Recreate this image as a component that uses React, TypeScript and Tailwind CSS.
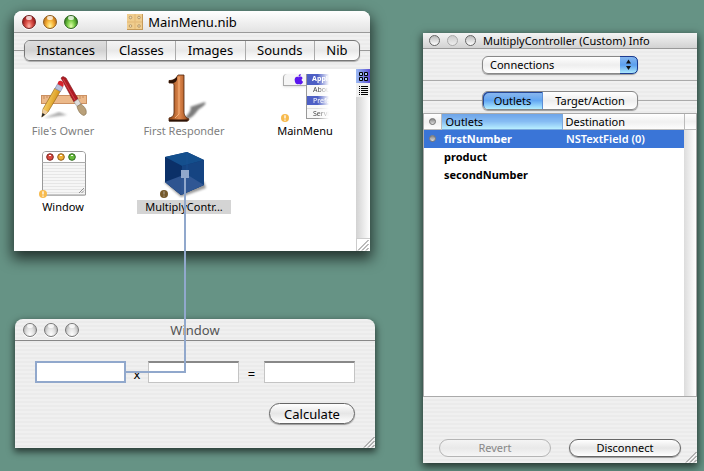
import type { ReactNode } from "react";

const stripes =
  "bg-[repeating-linear-gradient(180deg,#f0f0f0_0px,#f0f0f0_2px,#ebebeb_2px,#ebebeb_4px)]";

const lightColors = {
  red: "border-[#6e2222] bg-[radial-gradient(ellipse_at_50%_85%,#ffb9ad_0%,#e05a50_35%,#a51f1f_75%)]",
  yellow: "border-[#8a5a1c] bg-[radial-gradient(ellipse_at_50%_85%,#fff6a0_0%,#f9b83c_40%,#c4741a_80%)]",
  green: "border-[#2f6420] bg-[radial-gradient(ellipse_at_50%_85%,#e4ffae_0%,#7fd04a_40%,#35801f_80%)]",
  gray: "border-[#777] bg-[radial-gradient(ellipse_at_50%_90%,#ffffff_0%,#e2e2e2_45%,#adadad_90%)]",
};

function TrafficLight({ color, label }: { color: keyof typeof lightColors; label: string }) {
  return (
    <button
      aria-label={label}
      className={`relative block size-[14px] rounded-full border shadow-[0_1px_0_#fff] ${lightColors[color]}`}
    >
      <span className="absolute top-0 left-[3px] h-1 w-1.5 rounded-full bg-white/75" />
    </button>
  );
}

function Grip({ className = "" }: { className?: string }) {
  return (
    <svg viewBox="0 0 12 12" className={`size-3 ${className}`} aria-hidden="true">
      <path d="M1 11.5 11.5 1M5 11.5 11.5 5M9 11.5 11.5 9" stroke="#777" fill="none" />
      <path d="M2 12 12 2M6 12 12 6" stroke="#fff" strokeWidth=".6" fill="none" />
    </svg>
  );
}

/* Icons of the nib's instances */

function OwnerIcon() {
  return (
    <svg viewBox="0 0 48 48" className="size-12">
      <defs>
        <linearGradient id="pencil" x1="0" y1="0" x2="1" y2=".5">
          <stop offset="0.2" stopColor="#ffe27a" />
          <stop offset="0.8" stopColor="#d9971d" />
        </linearGradient>
        <filter id="soft">
          <feGaussianBlur stdDeviation="1" />
        </filter>
      </defs>
      <path d="M5 44 28 41 20 38Z" fill="#777" opacity=".6" filter="url(#soft)" />
      <rect x="2.5" y="21.5" width="45" height="8" fill="#ecb98a" stroke="#cb9062" />
      <path d="M5 22v3M8 22v2M11 22v3M14 22v2M32 22v2M35 22v3M38 22v2M41 22v3M44 22v2" stroke="#b97a48" strokeWidth=".7" />
      <path d="m22 4 2-1.500 3 1.500 12 21-4 3Z" fill="#b01c24" stroke="#7a1016" strokeWidth=".6" />
      <path d="m24 5 12 21" stroke="#e0565a" strokeWidth=".7" />
      <path d="m35 28 4-3 3 5-4 2.500Z" fill="#ddd" stroke="#888" strokeWidth=".5" />
      <path d="m38 32.500 4-2.500c4 3 6 6 5 10l-2 1.500c-4-1-6-5-7-9Z" fill="#b9a07a" stroke="#806947" strokeWidth=".6" />
      <path d="M16 14 21.500 17 9 38 3 43 4 35Z" fill="url(#pencil)" stroke="#9a6a1c" strokeWidth=".7" />
      <path d="m4 35 5 3-6 5Z" fill="#edcda0" />
      <path d="m3.500 39 2.500 1.500-3.500 3Z" fill="#222" />
      <path d="m18.500 10 5.500 3-2.500 4.500-5.500-3Z" fill="#b9c0da" stroke="#7480a5" strokeWidth=".6" />
      <path d="M18.500 10c.5-3 2-4 4-3s3 3 1.500 6Z" fill="#d9232d" />
    </svg>
  );
}

function ResponderIcon() {
  return (
    <svg viewBox="0 0 48 48" className="size-12">
      <defs>
        <linearGradient id="copper" x1="0" y1="0" x2="1" y2="0">
          <stop offset="0.1" stopColor="#9a4c1a" />
          <stop offset="0.5" stopColor="#e08a50" />
          <stop offset="0.8" stopColor="#b4602a" />
          <stop offset="1" stopColor="#4c210b" />
        </linearGradient>
        <filter id="blur">
          <feGaussianBlur stdDeviation="1.300" />
        </filter>
      </defs>
      <path d="M25 44C30 38 32 34 30 33l15-5c2 3-4 5-7 8-3 4-5 7-10 9Z" fill="#444" opacity=".7" filter="url(#blur)" />
      <path
        d="M9 6.500c5 0 7-2 9-5.500h6v36c0 4 1 6 5 8l-1 2H9v-3c4-1 5-3 5-6V11c0-2-2-2-5-2Z"
        fill="url(#copper)"
        stroke="#4b230c"
        strokeWidth=".8"
      />
      <path d="M9 6.500c4 0 7-2 8-4v3c-1 3-3 4-8 3.500ZM9 45.500h19l-1 2H9Z" fill="#2d1306" />
      <path d="M19 3v37l-4 4" stroke="#f3b07a" fill="none" strokeWidth="1" />
    </svg>
  );
}

function MenuIcon() {
  return (
    <div className="flex size-12 text-[7px] leading-[9px]">
      <div className="ml-0.5 flex h-3 w-[23px] justify-center rounded-tl border-b border-l border-[#aaa] bg-[#f5f5f5] shadow-sm">
        <svg viewBox="0 0 12 12" className="ml-1.5 size-[11px]">
          <path d="M6 3.500C8 2 10 3 10.500 4.500 9 5.500 9 7.500 11 8.500 10 11 8.500 12 6.500 11 4 12 2.500 10.500 2 8 1 4.500 3.500 2 6 3.500Z" fill="#5b16ee" />
          <path d="M6 3C6 1 7 0 8.500 0 8.500 2 7.500 3 6 3Z" fill="#5b16ee" />
        </svg>
      </div>
      <div className="h-[45px] flex-1 overflow-hidden border-b border-l border-[#999] bg-[#f8f8f8] mask-r-from-50%">
        <p className="h-[11px] bg-[#4d5fc5] pl-1 font-bold text-white">Appl</p>
        <p className="h-[11px] pl-1.5 text-[#444]">About</p>
        <p className="h-[9px] bg-[#4d5fc5] pl-1.5 text-white">Prefe</p>
        <p className="mt-[3px] border-t border-[#ddd] pl-1.5 text-[#444]">Servi</p>
      </div>
    </div>
  );
}

function WindowIcon() {
  return (
    <svg viewBox="0 0 48 48" className="size-12">
      <defs>
        <pattern id="lines" width="4" height="3" patternUnits="userSpaceOnUse">
          <rect width="4" height="3" fill="#f6f6f6" />
          <rect width="4" height="1" fill="#e6e6e6" />
        </pattern>
      </defs>
      <rect x="4" y="3" width="43" height="43" rx="3" fill="#000" opacity=".18" />
      <path d="M3.500 45V5q0-3.500 3.500-3.500h36q3.500 0 3.500 3.500v40Z" fill="url(#lines)" stroke="#999" />
      <path d="M4 12V5q0-3 3-3h36q3 0 3 3v7Z" fill="#fff" />
      <path d="M3 12.500h44" stroke="#aaa" />
      <circle cx="11" cy="7" r="3.300" fill="#d94b42" stroke="#7e2622" />
      <circle cx="22" cy="7" r="3.300" fill="#f2b136" stroke="#8f5c1b" />
      <circle cx="33" cy="7" r="3.300" fill="#69bd3e" stroke="#2c6a1c" />
      <path d="M10 5.500h2M21 5.500h2M32 5.500h2" stroke="#fff" />
      <path d="m40 43 5-5m-2.500 5 2.500-2.500" stroke="#777" strokeWidth=".8" />
    </svg>
  );
}

function CubeIcon() {
  return (
    <svg viewBox="0 0 48 48" className="size-12">
      <defs>
        <filter id="cubeShadow">
          <feGaussianBlur stdDeviation="1.200" />
        </filter>
      </defs>
      <path d="m4 32 17 15 25-9-2-6Z" fill="#555" opacity=".6" filter="url(#cubeShadow)" />
      <path d="M5 7 27 2l17 8v25L21 45 5 32Z" fill="#0e3b78" />
      <path d="M5 7 27 2l17 8-22 6Z" fill="#144f8d" />
      <path d="M5 7 22 16l-1 29L5 32Z" fill="#0b3068" />
      <path d="M22 16 44 10v25L21 45Z" fill="#154482" />
      <path d="M5 32 26 24l18 11-23 10Z" fill="#355a98" opacity=".85" />
      <path d="M27 2v22" stroke="#1c5597" strokeWidth=".6" />
    </svg>
  );
}

function WarningBadge({ dim }: { dim?: boolean }) {
  return (
    <svg viewBox="0 0 8 8" className="absolute bottom-0 left-0 size-2">
      <circle cx="4" cy="4" r="4" fill={dim ? "#75592b" : "#f7ba4d"} />
      <path d="M4 1.300v3.200M4 5.500v1.200" stroke={dim ? "#a59984" : "#fff"} strokeWidth="1.300" />
    </svg>
  );
}

type Instance = {
  name: string;
  icon: ReactNode;
  labelClass: string;
  badge?: ReactNode;
};

const instances: Instance[] = [
  { name: "File's Owner", icon: <OwnerIcon />, labelClass: "text-[#808080]" },
  { name: "First Responder", icon: <ResponderIcon />, labelClass: "text-[#808080]" },
  { name: "MainMenu", icon: <MenuIcon />, labelClass: "text-black", badge: <WarningBadge /> },
  { name: "Window", icon: <WindowIcon />, labelClass: "text-black", badge: <WarningBadge /> },
  {
    name: "MultiplyContr...",
    icon: <CubeIcon />,
    labelClass: "bg-[#d4d4d4] text-black",
    badge: <WarningBadge dim />,
  },
];

const tabs = ["Instances", "Classes", "Images", "Sounds", "Nib"];

function NibWindow() {
  return (
    <section className="mr-[5px] rounded-t-lg bg-white shadow-[0_6px_14px_2px_rgba(0,0,0,0.65)]">
      <header className="flex h-[22px] items-center rounded-t-lg border-b border-[#999] bg-linear-to-b from-white to-[#e3e3e3] pr-7 pl-2">
        <div className="flex flex-1 gap-[7px]">
          <TrafficLight color="red" label="Close" />
          <TrafficLight color="yellow" label="Minimize" />
          <TrafficLight color="green" label="Zoom" />
        </div>
        <h1 className="flex items-center gap-[5px] text-[13px] leading-5">
          <svg viewBox="0 0 16 16" className="size-4">
            <rect width="16" height="16" fill="#c69a58" />
            <rect width="15" height="15" fill="#f0cd8e" />
            <path d="M8 0v15M0 8h15" stroke="#e6be7e" strokeWidth="1.500" />
            <g fill="#eee0bd" stroke="#a98a5c" strokeWidth=".8">
              <circle cx="3.500" cy="3.500" r="1.300" />
              <circle cx="12" cy="3.500" r="1.300" />
              <circle cx="3.500" cy="12" r="1.300" />
              <circle cx="12" cy="12" r="1.300" />
            </g>
          </svg>
          MainMenu.nib
        </h1>
        <div className="flex-1" />
      </header>

      <div className={`flex h-9 items-center pb-0.5 ${stripes}`}>
        <span className="h-px w-2.5 bg-[#999]" />
        <div className="flex h-[21px] flex-1 rounded-md border border-[#777] bg-linear-to-b from-[#f4f4f4] via-[#e9e9e9] to-white shadow-[0_1px_1px_#aaa]">
          {tabs.map((tab, i) => (
            <button
              key={tab}
              className={`flex-auto border-r border-[#aaa] px-1 text-[13px] leading-[18px] last:border-r-0 ${
                i === 0 ? "rounded-l-[5px] bg-linear-to-b from-[#dedede] via-[#d2d2d2] to-[#efefef]" : ""
              }`}
            >
              {tab}
            </button>
          ))}
        </div>
        <span className="h-px w-2.5 bg-[#999]" />
      </div>

      <div className="flex h-[182px]">
        <div className="grid flex-1 auto-rows-[64px] grid-cols-[94px_94px_94px] gap-x-[27px] gap-y-3 pt-[5px] pl-0.5">
          {instances.map((item) => (
            <button key={item.name} className="flex flex-col items-center gap-0.5">
              <span className="relative block size-12">
                {item.icon}
                {item.badge}
              </span>
              <span className={`w-full text-[11px] leading-[14px] whitespace-nowrap ${item.labelClass}`}>
                {item.name}
              </span>
            </button>
          ))}
        </div>
        <div className="flex w-[14px] flex-col bg-linear-to-r from-[#d2d2d2] to-white">
          <button aria-label="Icon view" className="bg-linear-to-r from-[#9ebcf4] to-[#5b4bd0]">
            <svg viewBox="0 0 14 14" className="size-[14px]">
              <path d="M3.500 3.500h3v3h-3zM8.500 3.500h3v3h-3zM3.500 8.500h3v3h-3zM8.500 8.500h3v3h-3z" fill="#a8c9f5" stroke="#000" />
            </svg>
          </button>
          <button aria-label="List view" className="bg-[#f1f1f1]">
            <svg viewBox="0 0 14 14" className="size-[14px]">
              <path d="M5 3.500h7M5 5.500h7M5 7.500h7M5 9.500h7M5 11.500h7M3 3.500h1M3 5.500h1M3 7.500h1M3 9.500h1M3 11.500h1" stroke="#000" />
            </svg>
          </button>
          <div className="mt-auto border-t border-l border-[#ccc] bg-white">
            <Grip />
          </div>
        </div>
      </div>
    </section>
  );
}

const fieldClass =
  "h-[22px] w-0 flex-1 border border-t-2 border-[#c4c4c4] border-t-[#888] bg-white px-1 text-[13px] outline-none";

function CalculatorWindow() {
  return (
    <section className={`ml-px rounded-t-lg shadow-[0_3px_7px_1px_rgba(0,0,0,0.6)] ${stripes}`}>
      <header className="flex h-[22px] items-center border-b border-[#888] px-2">
        <div className="flex flex-1 gap-[7px]">
          <TrafficLight color="gray" label="Close" />
          <TrafficLight color="gray" label="Minimize" />
          <TrafficLight color="gray" label="Zoom" />
        </div>
        <h2 className="text-[13px] leading-5 text-[#555]">Window</h2>
        <div className="flex-1" />
      </header>
      <div className="px-5 pt-5">
        <div className="flex items-center">
          <input
            aria-label="First number"
            className="h-[22px] w-0 flex-1 border-2 border-[#91a8cc] bg-white px-[3px] text-[13px] outline-none"
          />
          <span className="w-[22px] pt-1 text-center text-[13px] leading-4">x</span>
          <input aria-label="Second number" className={fieldClass} />
          <span className="w-[25px] pt-1 text-center text-[13px] leading-4">=</span>
          <input aria-label="Product" className={fieldClass} />
        </div>
        <div className="mt-5 flex justify-end">
          <button className="h-[21px] w-[86px] rounded-full border border-[#666] bg-linear-to-b from-white via-[#e6e6e6] to-white text-[13px] leading-[18px] shadow-[0_1px_1px_#999]">
            Calculate
          </button>
        </div>
      </div>
      <div className="flex h-6 items-end justify-end">
        <Grip />
      </div>
    </section>
  );
}

const outlets = [
  { name: "firstNumber", destination: "NSTextField (0)" },
  { name: "product", destination: "" },
  { name: "secondNumber", destination: "" },
];

function InfoDot() {
  return (
    <span className="mx-auto block size-[7px] rounded-full border border-[#777] bg-linear-to-b from-[#888] to-[#ddd]" />
  );
}

function InfoWindow() {
  return (
    <section className={`flex flex-1 flex-col shadow-[0_3px_8px_1px_rgba(0,0,0,0.65)] ${stripes}`}>
      <header className="flex h-4 items-center gap-[7px] border-b border-[#999] bg-linear-to-b from-[#f4f4f4] to-[#d2d2d2] pl-1.5">
        <button aria-label="Close" className="size-[11px] rounded-full border border-[#666] bg-linear-to-b from-[#bbb] to-white" />
        <button aria-label="Minimize" className="size-[11px] rounded-full border border-[#aaa] bg-linear-to-b from-[#ccc] to-[#eee]" />
        <button aria-label="Zoom" className="size-[11px] rounded-full border border-[#666] bg-linear-to-b from-[#bbb] to-white" />
        <h2 className="text-[11px] leading-[14px] whitespace-nowrap">MultiplyController (Custom) Info</h2>
      </header>

      <div className="flex h-8 items-center justify-center border-b border-[#aaa]">
        <div className="relative h-[18px] w-[156px]">
          <select
            aria-label="Inspector"
            className="block h-full w-full appearance-none rounded-md border border-[#888] bg-linear-to-b from-white via-[#eee] to-white pl-[7px] text-[11px] leading-4 shadow-[0_1px_1px_#999]"
          >
            <option>Connections</option>
          </select>
          <svg viewBox="0 0 18 18" className="pointer-events-none absolute top-0 right-0 size-[18px]">
            <defs>
              <linearGradient id="aqua" x1="0" y1="0" x2="0" y2="1">
                <stop offset="0" stopColor="#8bb9ef" />
                <stop offset="0.5" stopColor="#5b9fee" />
                <stop offset="1" stopColor="#b5f1ff" />
              </linearGradient>
            </defs>
            <path d="M0 0h12q6 0 6 6v6q0 6-6 6H0Z" fill="url(#aqua)" />
            <path d="M0 .5h12q5.500 0 5.500 5.500v6q0 5.500-5.500 5.500H0" fill="none" stroke="#1c3b8f" />
            <path d="m8.500 3.500 2.500 4H6ZM8.500 14l2.500-4H6Z" fill="#111" />
          </svg>
        </div>
      </div>

      <div className="flex h-8 items-center pt-[10px] pb-[3px]">
        <span className="h-px flex-1 bg-[#aaa]" />
        <div className="flex h-[19px] w-[156px] rounded-md border border-[#888] bg-linear-to-b from-white via-[#eee] to-white text-[11px] leading-4 shadow-[0_1px_1px_#999]">
          <button className="w-[60px] rounded-l-[5px] border-r border-[#5c8fd6] bg-linear-to-b from-[#8db8ed] via-[#62a6f2] to-[#b2eeff] shadow-[inset_1px_1px_0_#25489a]">
            Outlets
          </button>
          <button className="flex-1">Target/Action</button>
        </div>
        <span className="h-px flex-1 bg-[#aaa]" />
      </div>

      <div className="flex flex-1 border border-[#aaa] bg-white">
        <div className="flex-1">
          <table className="w-full table-fixed border-collapse text-left text-[11px] leading-[15px]">
            <thead>
              <tr className="bg-linear-to-b from-white via-[#f0f0f0] to-white">
                <th className="w-[17px] border-r border-b border-[#bbb] p-0">
                  <InfoDot />
                </th>
                <th className="w-[121px] border-r border-b border-[#7aa7dc] bg-linear-to-b from-[#6ea4e8] via-[#86bcf3] to-[#b8eeff] p-0 pl-1 font-normal">
                  Outlets
                </th>
                <th className="border-b border-[#bbb] p-0 pl-[3px] font-normal">Destination</th>
              </tr>
            </thead>
            <tbody>
              {outlets.map((outlet, i) => (
                <tr key={outlet.name} className={`h-[18px] font-bold ${i === 0 ? "bg-[#3a75d7] text-white" : ""}`}>
                  <td className="p-0">{i === 0 && <InfoDot />}</td>
                  <td className="p-0 pl-[3px]">{outlet.name}</td>
                  <td className="p-0 pl-1 font-semibold">{outlet.destination}</td>
                </tr>
              ))}
            </tbody>
          </table>
        </div>
        <div className="w-3 bg-linear-to-r from-[#dcdcdc] to-white">
          <div className="h-4 border-b border-l border-[#bbb] bg-linear-to-b from-white via-[#f0f0f0] to-white" />
        </div>
      </div>

      <footer className="flex gap-[18px] px-4 pt-[42px]">
        <button
          disabled
          className="h-[18px] flex-1 rounded-full border border-[#b5b5b5] bg-linear-to-b from-[#f4f4f4] via-[#e9e9e9] to-[#f6f6f6] text-[11px] leading-4 text-[#888]"
        >
          Revert
        </button>
        <button className="h-[18px] flex-1 rounded-full border border-[#666] bg-linear-to-b from-white via-[#e6e6e6] to-white text-[11px] leading-4 shadow-[0_1px_1px_#999]">
          Disconnect
        </button>
      </footer>
      <div className="flex h-1.5 items-end justify-end">
        <Grip />
      </div>
    </section>
  );
}

export default function App() {
  return (
    <main className="relative grid min-h-screen grid-cols-[361fr_274fr] gap-12 bg-[#669385] pr-[7px] pl-[14px] font-['Noto_Sans','Open_Sans',sans-serif] text-black">
      <div className="flex flex-col gap-[68px] pt-[11px]">
        <NibWindow />
        <CalculatorWindow />
      </div>
      <div className="flex flex-col pt-[33px] pb-2">
        <InfoWindow />
      </div>

      {/* Connection being dragged from the controller to the first field */}
      <svg width="400" height="400" className="pointer-events-none absolute top-0 left-0" aria-hidden="true">
        <rect x="181" y="170" width="8" height="8" fill="#91a8cc" />
        <path d="M185 174v198h-59" fill="none" stroke="#91a8cc" strokeWidth="2" />
      </svg>
    </main>
  );
}
